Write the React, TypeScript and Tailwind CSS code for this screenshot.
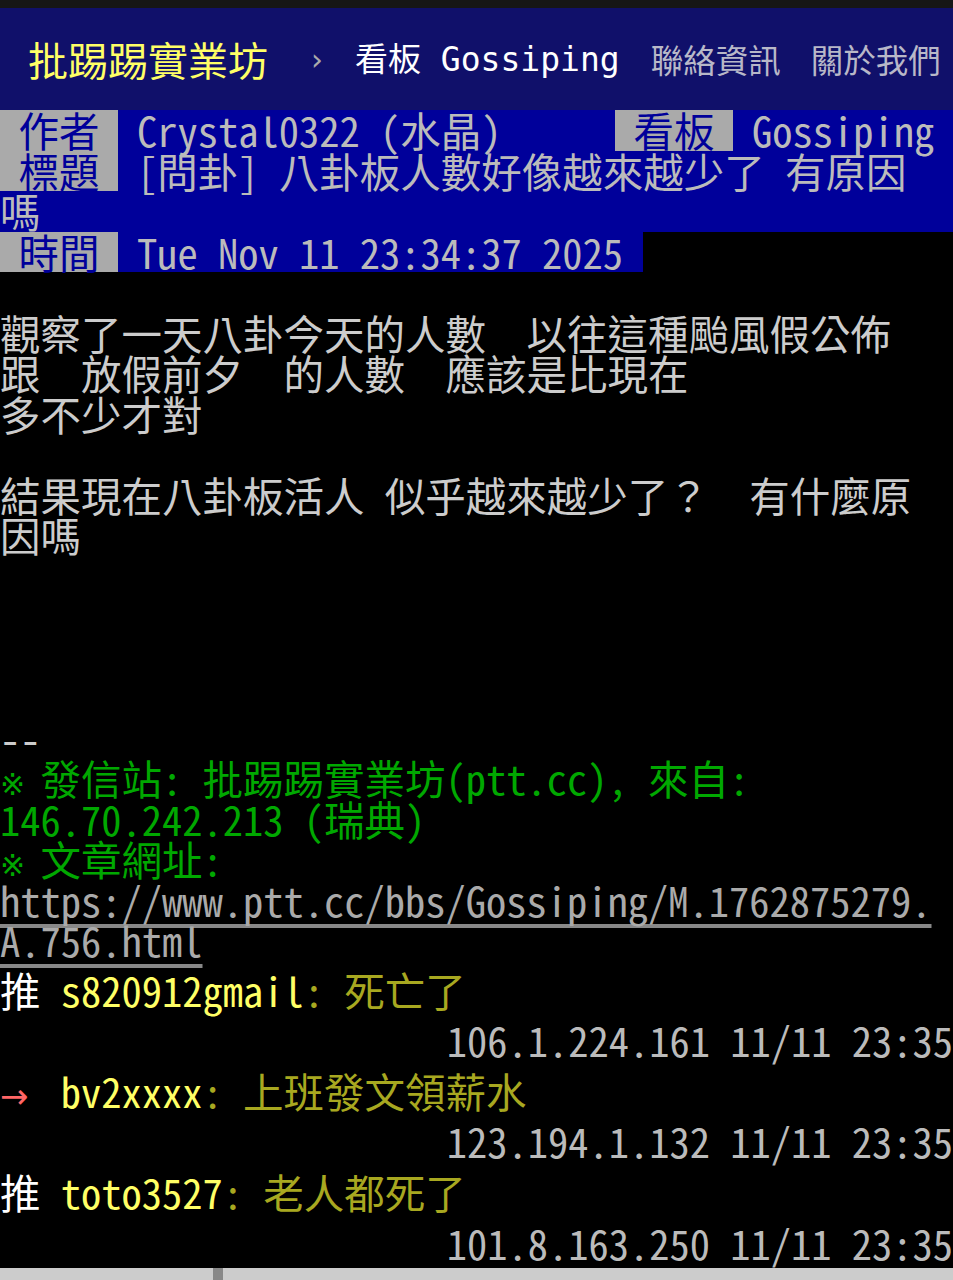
import React from "react";

const mono = "font-['Noto_Sans_Mono_CJK_TC','Noto_Sans_Mono_CJK_SC','DejaVu_Sans_Mono',monospace]";

function Tag({ children }: { children: React.ReactNode }) {
  return <span className="inline-block bg-[#aaaaaa] text-[#00009a] px-[18.5px]">{children}</span>;
}

function Line({ children, className = "" }: { children?: React.ReactNode; className?: string }) {
  return <div className={`h-[40.5px] whitespace-pre ${className}`}>{children ?? "\u00a0"}</div>;
}

function Kome() {
  return <span className="inline-block w-[20.25px] text-[30px] font-['DejaVu_Sans',sans-serif]">※</span>;
}

type Push = { tag: string; user: string; content: string; ip: string };
const pushes: Push[] = [
  { tag: "推", user: "s820912gmail", content: ": 死亡了", ip: "106.1.224.161 11/11 23:35" },
  { tag: "→", user: "bv2xxxx", content: ": 上班發文領薪水", ip: "123.194.1.132 11/11 23:35" },
  { tag: "推", user: "toto3527", content: ": 老人都死了", ip: "101.8.163.250 11/11 23:35" },
];

export default function App() {
  return (
    <div className="w-[953px] min-h-[1280px] bg-black overflow-hidden">
      <div className="h-[8px] bg-[#161616]" />
      <header className="h-[102px] bg-[#10106a] flex items-center whitespace-nowrap">
        <span className="ml-[28px] text-[40px] leading-none text-[#ffff66] font-['Noto_Sans_CJK_TC',sans-serif]">批踢踢實業坊</span>
        <span className="ml-[39px] w-[20px] text-center text-[30px] text-[#aaaaaa] font-['DejaVu_Sans',sans-serif]">›</span>
        <span className="ml-[28px] text-[33px] leading-none text-white font-['DejaVu_Sans_Mono','Noto_Sans_CJK_TC',monospace]">看板 Gossiping</span>
        <span className="ml-[31px] text-[32.5px] leading-none text-[#b8b8c8] font-['Noto_Sans_CJK_TC',sans-serif]">聯絡資訊</span>
        <span className="ml-[30px] text-[32.5px] leading-none text-[#b8b8c8] font-['Noto_Sans_CJK_TC',sans-serif]">關於我們</span>
      </header>

      <main className={`${mono} text-[40.5px] leading-[40.5px] text-[#cccccc]`}>
        <div className="bg-[#00009a] text-[#bbbbbb]">
          <div className="flex justify-between whitespace-pre h-[40.5px]">
            <div className="flex">
              <Tag>作者</Tag>
              <span className="pl-[19px]">Crystal0322 (水晶)</span>
            </div>
            <div className="flex">
              <Tag>看板</Tag>
              <span className="pl-[19px] pr-[18.75px]">Gossiping</span>
            </div>
          </div>
          <div className="flex whitespace-pre h-[40.5px]">
            <Tag>標題</Tag>
            <span className="pl-[19px]">[問卦] 八卦板人數好像越來越少了 有原因</span>
          </div>
          <div className="h-[40.5px]">嗎</div>
        </div>
        <div className="flex h-[40.5px]">
          <div className="flex bg-[#00009a] text-[#bbbbbb] whitespace-pre">
            <Tag>時間</Tag>
            <span className="pl-[19px] pr-[20px]">Tue Nov 11 23:34:37 2025</span>
          </div>
        </div>

        <Line />
        <Line>觀察了一天八卦今天的人數　以往這種颱風假公佈</Line>
        <Line>跟　放假前夕　的人數　應該是比現在</Line>
        <Line>多不少才對</Line>
        <Line />
        <Line>結果現在八卦板活人 似乎越來越少了？　有什麼原</Line>
        <Line>因嗎</Line>
        <Line />
        <Line />
        <Line />
        <Line />
        <Line>--</Line>
        <Line className="text-[#00a800]"><Kome /> 發信站: 批踢踢實業坊(ptt.cc), 來自: </Line>
        <Line className="text-[#00a800]">146.70.242.213 (瑞典)</Line>
        <Line className="text-[#00a800]"><Kome /> 文章網址: </Line>
        <Line className="text-[#aaaaaa]">
          <span className="underline decoration-[#888888] decoration-4 underline-offset-[7px] [text-decoration-skip-ink:none]">https://www.ptt.cc/bbs/Gossiping/M.1762875279.</span>
        </Line>
        <Line className="text-[#aaaaaa]">
          <span className="underline decoration-[#888888] decoration-4 underline-offset-[7px] [text-decoration-skip-ink:none]">A.756.html</span>
        </Line>

        <div className="mt-[4px] leading-[50.625px]">
          {pushes.map((p, i) => (
            <div key={i}>
              <div className="whitespace-pre h-[50.625px]">
                {p.tag === "推" ? (
                  <span className="text-white">推 </span>
                ) : (
                  <span className="text-[#ff6666]">
                    <span className="inline-block w-[40.5px] text-[34px] font-['DejaVu_Sans',sans-serif]">→</span>{" "}
                  </span>
                )}
                <span className="text-[#ffff66]">{p.user}</span>
                <span className="text-[#a8a820]">{p.content}</span>
              </div>
              <div className="whitespace-pre h-[50.625px] text-right text-[#bbbbbb]">{p.ip}</div>
            </div>
          ))}
        </div>
      </main>

      <div className="h-[12px] bg-[#cccccc] flex">
        <div className="ml-[213px] w-[10px] bg-[#888888]" />
      </div>
    </div>
  );
}
